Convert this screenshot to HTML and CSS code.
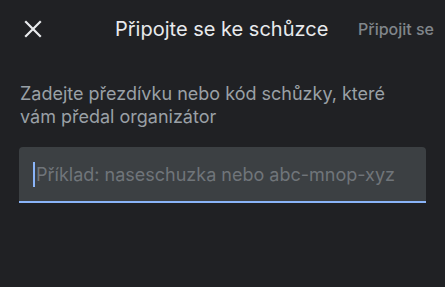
FILE: index.html
```html
<!DOCTYPE html>
<html lang="cs">
<head>
  <meta charset="UTF-8">
  <meta name="viewport" content="width=device-width, initial-scale=1.0">
  <title>Připojte se ke schůzce</title>
  <link rel="stylesheet" href="styles.css">
</head>
<body>

  <header class="topbar">
    <button class="close-btn" aria-label="Zavřít">
      <svg width="18" height="18" viewBox="0 0 18 18">
        <path d="M2 2 L16 16 M16 2 L2 16" stroke="#e8eaed" stroke-width="2.2" stroke-linecap="square" fill="none"/>
      </svg>
    </button>
    <h1 class="title">Připojte se ke schůzce</h1>
    <span class="join-link">Připojit se</span>
  </header>

  <main class="content">
    <p class="hint">Zadejte přezdívku nebo kód schůzky, které vám předal organizátor</p>

    <div class="field">
      <span class="caret"></span>
      <span class="placeholder">Příklad: naseschuzka nebo abc-mnop-xyz</span>
    </div>
  </main>

</body>
</html>
```

FILE: styles.css
```css
/* Page */
body {
  margin: 0;
  padding: 0;
  background-color: #202124;
  font-family: 'Inter', 'Noto Sans', sans-serif;
  color: #e8eaed;
  width: 445px;
  height: 287px;
  overflow: hidden;
}

/* Top bar */
.topbar {
  display: flex;
  align-items: center;
  height: 58px;
  padding: 0 11px 0 24px;
}

.close-btn {
  background: none;
  border: none;
  padding: 0;
  width: 18px;
  height: 18px;
  display: flex;
  cursor: pointer;
}

.title {
  margin: 0 0 0 73px;
  font-size: 20px;
  font-weight: 400;
  color: #e8eaed;
  white-space: nowrap;
}

.join-link {
  margin-left: auto;
  font-size: 16px;
  font-weight: 500;
  color: #80868b;
  white-space: nowrap;
}

/* Content */
.content {
  padding: 24px 19px 0 19px;
}

.hint {
  margin: 0 0 0 1px;
  font-size: 18px;
  line-height: 23px;
  color: #9aa0a6;
  max-width: 390px;
}

.field {
  margin-top: 19px;
  height: 54px;
  background-color: #3c4043;
  border-radius: 4px 4px 0 0;
  border-bottom: 2px solid #8ab4f8;
  display: flex;
  align-items: center;
  padding-left: 14px;
}

.caret {
  width: 2px;
  height: 25px;
  background-color: #8ab4f8;
  margin-right: 1px;
}

.placeholder {
  font-size: 18px;
  color: #70757a;
  white-space: nowrap;
}
```
